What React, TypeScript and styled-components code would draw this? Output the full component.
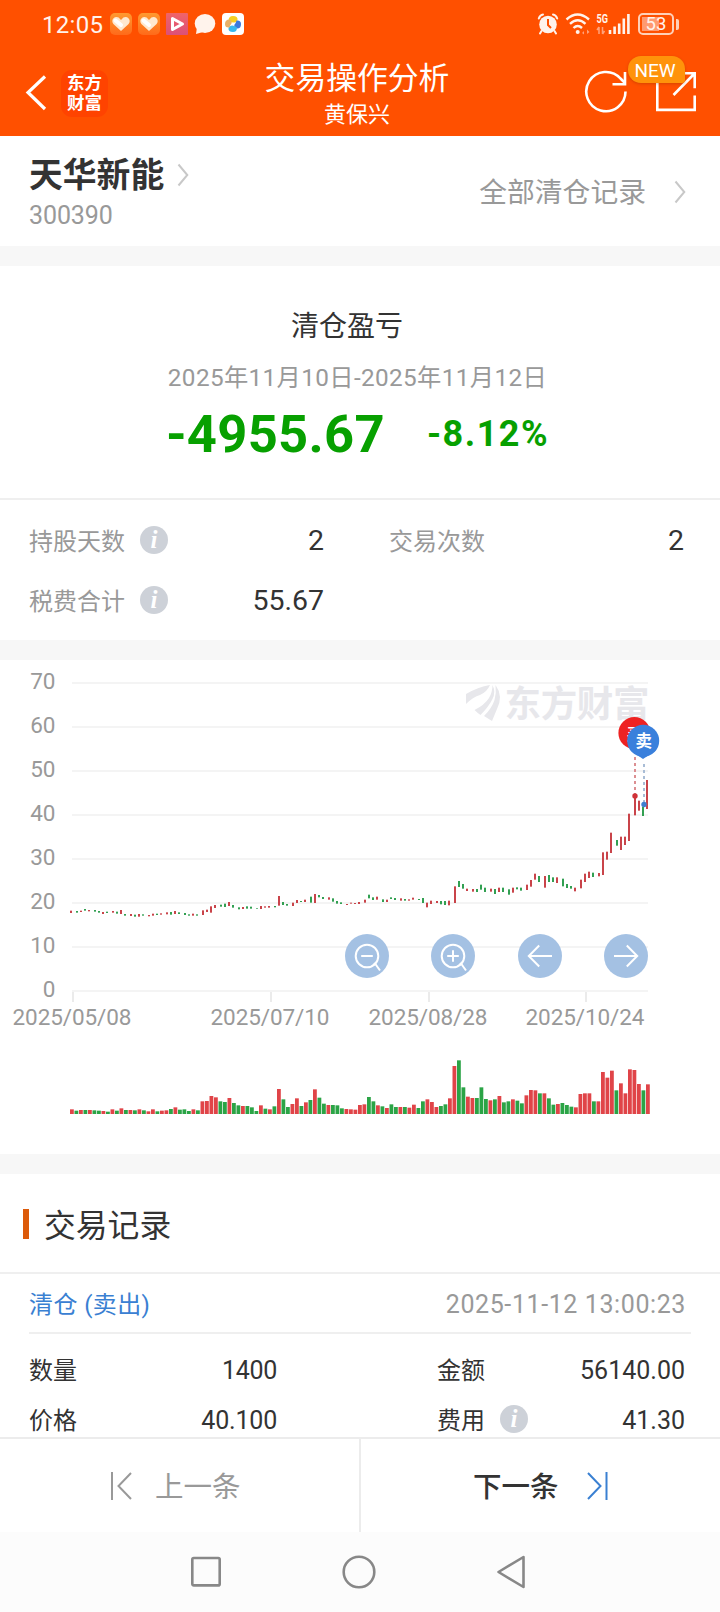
import React from 'react';
import styled, { createGlobalStyle } from 'styled-components';

const GlobalStyle = createGlobalStyle`
  * { box-sizing: border-box; }
  body {
    margin: 0;
    background: #fff;
    color: #333;
    font-family: Roboto, "Noto Sans CJK SC", sans-serif;
  }
  svg { display: block; flex: none; }
`;

const Page = styled.div`
  width: 720px;
  height: 1612px;
  display: flex;
  flex-direction: column;
  overflow: hidden;
  background: #fff;
`;

const Label = styled.span<{
  $size: number;
  $color?: string;
  $weight?: number;
  $track?: number;
  $line?: number;
  $pad?: number;
}>`
  padding-top: ${(p) => p.$pad ?? 0}px;
  font-size: ${(p) => p.$size}px;
  color: ${(p) => p.$color ?? '#333'};
  font-weight: ${(p) => p.$weight ?? 400};
  letter-spacing: ${(p) => p.$track ?? 0}px;
  line-height: ${(p) => p.$line ?? 28}px;
  white-space: nowrap;
`;

/* ---------- status bar and header ---------- */

const TopArea = styled.header`
  height: 136px;
  flex: none;
  background: #ff5000;
`;

const StatusBar = styled.div`
  height: 48px;
  padding: 0 41px 0 42px;
  display: flex;
  align-items: center;
  justify-content: space-between;
`;

const StatusGroup = styled.div<{ $gap: number }>`
  display: flex;
  align-items: center;
  gap: ${(p) => p.$gap}px;
`;

const Clock = styled(Label)`
  width: 62px;
`;

const AppBadge = styled.span<{ $bg: string; $round: number }>`
  width: 22px;
  height: 22px;
  border-radius: ${(p) => p.$round}px;
  background: ${(p) => p.$bg};
  display: flex;
  align-items: center;
  justify-content: center;
`;

const Battery = styled.span`
  width: 36px;
  height: 22px;
  margin-left: 7px;
  border: 2px solid #ffd0b8;
  border-radius: 5px;
  background: linear-gradient(to right, #ff9a70 0 17px, transparent 17px) 2px 2px / 30px 14px no-repeat;
  color: #fff3ec;
  font-size: 18.5px;
  line-height: 18px;
  text-align: center;
`;

const BatteryTip = styled.span`
  width: 3px;
  height: 11px;
  margin-left: 2px;
  border-radius: 0 2px 2px 0;
  background: #ffd0b8;
`;

const TitleBar = styled.div`
  height: 88px;
  padding: 0 23px 0 17px;
  display: grid;
  grid-template-columns: 1fr auto 1fr;
`;

const BrandSide = styled.div`
  display: flex;
  align-items: center;
  gap: 14px;
`;

const BrandLogo = styled.div`
  width: 47px;
  height: 47px;
  margin-top: 2px;
  border-radius: 11px;
  background: #ff4300;
  display: flex;
  flex-direction: column;
  align-items: center;
  justify-content: center;
`;

const TitleColumn = styled.div`
  padding-top: 11px;
  display: flex;
  flex-direction: column;
  align-items: center;
  gap: 2px;
`;

const ActionSide = styled.div`
  position: relative;
  display: flex;
  justify-content: flex-end;
  align-items: flex-start;
  padding-top: 21px;
  gap: 26px;
`;

const NewBadge = styled.span`
  position: absolute;
  top: 8px;
  right: 12px;
  width: 57px;
  height: 27px;
  border-radius: 13px 13px 3px 13px;
  background: #ff930a;
  box-shadow: 0 1px 3px rgba(120, 40, 0, 0.3);
  color: #fff;
  font-size: 19px;
  line-height: 29px;
  text-align: center;
  padding-right: 3px;
`;

/* ---------- stock and profit ---------- */

const Gutter = styled.div`
  height: 20px;
  flex: none;
  background: #f7f7f7;
`;

const StockRow = styled.section`
  height: 110px;
  flex: none;
  padding: 17px 34px 0 29px;
  display: flex;
  justify-content: space-between;
`;

const StockColumn = styled.div`
  display: flex;
  flex-direction: column;
  gap: 4px;
`;

const InlineLink = styled.div<{ $gap: number; $height: number; $top?: number }>`
  height: ${(p) => p.$height}px;
  margin-top: ${(p) => p.$top ?? 0}px;
  display: flex;
  align-items: center;
  gap: ${(p) => p.$gap}px;
`;

const ProfitPanel = styled.section`
  height: 234px;
  flex: none;
  padding: 41px 5px 0 0;
  border-bottom: 2px solid #efefef;
  display: flex;
  flex-direction: column;
  align-items: center;
`;

const ProfitTitle = styled(Label)`
  margin: 0 21px 16px 0;
`;

const ProfitFigures = styled.div`
  margin-top: 8px;
  height: 66px;
  display: flex;
  align-items: center;
  gap: 42px;
`;

const StatsGrid = styled.section`
  height: 140px;
  flex: none;
  padding: 10px 35px 0 29px;
  display: grid;
  grid-template-columns: 295px 295px;
  grid-auto-rows: 60px;
  column-gap: 65px;
`;

const Stat = styled.div`
  display: flex;
  align-items: center;
`;

const StatValue = styled(Label)`
  margin-left: auto;
`;

const InfoMark = styled.span<{ $lift?: number }>`
  width: 28px;
  height: 28px;
  margin-left: 15px;
  margin-bottom: ${(p) => p.$lift ?? 0}px;
  border-radius: 50%;
  background: #cdd1d8;
  color: #fff;
  font: italic bold 25px/27px "Liberation Serif", serif;
  text-align: center;
`;

/* ---------- chart ---------- */

const ChartPanel = styled.section`
  position: relative;
  height: 494px;
  flex: none;
`;

const ChartTools = styled.div`
  position: absolute;
  left: 345px;
  top: 274px;
  width: 303px;
  display: flex;
  justify-content: space-between;
`;

const ToolButton = styled.button`
  width: 44px;
  height: 44px;
  padding: 0;
  border: 0;
  border-radius: 50%;
  background: rgba(157, 188, 225, 0.93);
`;

/* ---------- trade records ---------- */

const SectionTitle = styled.div`
  height: 100px;
  flex: none;
  padding: 2px 0 0 23px;
  border-bottom: 2px solid #efefef;
  display: flex;
  align-items: center;
  gap: 15px;
`;

const Accent = styled.span`
  width: 6px;
  height: 30px;
  background: #dc5a0a;
`;

const RecordHead = styled.div`
  height: 60px;
  flex: none;
  margin: 0 29px;
  padding-right: 5px;
  border-bottom: 2px solid #efefef;
  display: flex;
  align-items: center;
  justify-content: space-between;
`;

const RecordGrid = styled.div`
  height: 103px;
  flex: none;
  padding: 12px 35px 0 29px;
  display: grid;
  grid-template-columns: 248px 248px;
  grid-auto-rows: 50px;
  justify-content: space-between;
  overflow: hidden;
`;

const Pager = styled.nav`
  height: 95px;
  flex: none;
  border-top: 2px solid #ececec;
  display: grid;
  grid-template-columns: 359px 361px;
`;

const PagerButton = styled.div<{ $divided?: boolean; $gap: number; $left: number }>`
  padding-left: ${(p) => p.$left}px;
  border-left: ${(p) => (p.$divided ? '2px solid #ececec' : '0')};
  display: flex;
  align-items: center;
  gap: ${(p) => p.$gap}px;
`;

const SystemNav = styled.footer`
  height: 80px;
  flex: none;
  padding: 0 192px 0 189px;
  background: #fcfcfc;
  display: flex;
  align-items: center;
  justify-content: space-between;
`;

/* ---------- data, in thirds of a pixel measured inside the plot ---------- */

const CANDLES = `
r152,159 g153,158 r152,156 g147,152 r150,154 g150,155 g153,158 r156,162 g155,159 r153,158 g155,161 r150,162
g162,167 r162,168 g164,170 r162,170 g163,167 r165,169 r161,167 g161,165 r160,164 r157,163 g156,164 r153,162
g157,162 g159,165 g163,167 r161,167 g163,167 r151,165 r149,156 r139,158 r135,144 g134,140 g131,141 r126,138
g135,143 g142,148 r141,147 g139,146 g140,146 g145,147 r138,147 r139,143 r138,143 g138,142 r108,137 g126,135
g132,137 r128,138 r120,129 g123,126 r119,126 g110,128 r102,129 g105,112 g111,117 r112,119 g115,125 g123,131
g127,132 r132,135 r128,131 r129,132 r126,132 r119,128 g104,115 g112,120 r110,119 g118,126 r119,126 g112,117
g114,120 r115,122 g117,122 r118,122 r113,119 g117,120 g114,129 r128,142 r122,132 r123,129 g123,133 g123,135
r122,136 r79,129 g63,81 g72,86 r86,93 r87,95 g87,96 g74,89 g83,96 r86,95 g87,102 r83,96
g83,96 g88,104 r83,98 g82,88 g83,92 r74,90 r60,80 r41,59 g48,66 r48,83 g45,66 g52,66
r52,69 g56,79 g72,84 g78,86 r83,94 r59,85 r41,66 r35,54 g38,51 r39,49 r-23,45 r-25,-1
r-82,-21 g-60,-43 r-70,-30 r-70,-45 r-139,-57 r-190,-134 r-178,-148 g-160,-132 r-240,-153`
  .trim()
  .split(/\s+/)
  .map((c) => {
    const [top, bottom] = c.slice(1).split(',').map(Number);
    return { up: c[0] === 'r', top, bottom };
  });

const VOLUMES = `
r208 g212 r210 g210 r210 g211 g212 r213 g215 r208 g212 r205 g210 r210 g211 r208 g211 r214 r208 g214 r212 r211
g207 r202 g209 g208 g213 r208 g211 r184 r183 r168 r172 g184 g186 r174 g189 g196 r198 g198 g202 g213 r196 g206
r208 g199 r147 g178 g201 r192 r175 g198 r187 g180 r148 g173 g191 r195 g195 g196 g205 r207 r208 r209 r195 r193
g171 g184 r196 g199 r204 g193 g201 r201 g201 r203 r194 g204 g184 r178 r186 r201 g198 g193 r175 r78 g61 g142
r170 r174 g174 g142 g177 r181 g178 r168 g187 g184 r178 g182 g190 r166 r150 r151 g160 r160 g175 g194 r192 g189
g195 g200 r202 r162 r160 r160 g184 r184 r96 r113 r92 g151 r130 r160 r88 r90 r132 g151 r133`
  .trim()
  .split(/\s+/)
  .map((v) => ({ up: v[0] === 'r', top: Number(v.slice(1)) }));

const DATES = [
  { x: 72, text: '2025/05/08' },
  { x: 270, text: '2025/07/10' },
  { x: 428, text: '2025/08/28' },
  { x: 585, text: '2025/10/24' },
];

const Chart = () => (
  <svg width="720" height="494" viewBox="0 660 720 494" fontFamily='Roboto, "Noto Sans CJK SC", sans-serif'>
    <g fill="#e7e7eb">
      <path d="M466 694q12-7 24-9-3 7-10 10-7 2-14 9z" />
      <path d="M474.500 710q10-5 14.500-12 3.500-6 3.500-13 3.500 7 0 14-4 8-12 16-3.500-2.500-6-5z" />
      <path d="M495.500 685q8 11 1.500 24l-5 12-8-5q8-8 10.500-16 2-7 1-15z" />
      <text x="504.500" y="717" fontSize="36.500" fontWeight="700" textLength="145">东方财富</text>
    </g>
    {[70, 60, 50, 40, 30, 20, 10, 0].map((n, i) => (
      <g key={n}>
        <rect x="72" y={682 + i * 44} width="576" height="2" fill="#f4f4f4" />
        <text x="55.500" y={689 + i * 44} fontSize="22.500" fill="#999" textAnchor="end">{n}</text>
      </g>
    ))}
    {DATES.map((d) => (
      <g key={d.text}>
        <rect x={d.x} y="992" width="2" height="10" fill="#ebebeb" />
        <text x={d.x} y="1025.300" fontSize="22.500" fill="#999" textAnchor="middle" textLength="119">{d.text}</text>
      </g>
    ))}
    {CANDLES.map((c, i) => (
      <rect
        key={i}
        x={70 + 2 * Math.ceil(2.25 * i)}
        y={860 + c.top / 3}
        width="2"
        height={(c.bottom - c.top) / 3}
        fill={c.up ? '#c9444a' : '#32a052'}
      />
    ))}
    {VOLUMES.map((v, i) => (
      <rect
        key={i}
        x={70 + 4.5 * i}
        y={1040 + v.top / 3}
        width="3.800"
        height={(222 - v.top) / 3}
        fill={v.up ? '#e04448' : '#2ba446'}
      />
    ))}
    <path d="M635 757V794" stroke="#dc8f92" strokeWidth="2" strokeDasharray="3 3" />
    <path d="M644 764V802" stroke="#a9bdd6" strokeWidth="2" strokeDasharray="3 3" />
    <circle cx="635" cy="796" r="2.700" fill="#d03238" />
    <circle cx="644" cy="804.500" r="2.700" fill="#3f7fd0" />
    <circle cx="634.400" cy="733" r="16" fill="#ee2222" />
    <text x="634.400" y="739.500" fontSize="16" fontWeight="500" fill="#fff" textAnchor="middle">买</text>
    <path d="M630.500 750.500 643 759 656 750.500z" fill="#3a80dc" />
    <circle cx="643.200" cy="740.800" r="16" fill="#3a80dc" />
    <text x="643.700" y="747" fontSize="16.500" fontWeight="700" fill="#fff" textAnchor="middle">卖</text>
  </svg>
);

/* ---------- icons ---------- */

const HeartIcon = () => (
  <svg width="20" height="16" viewBox="0 0 20 16">
    <path d="M10 15 2.400 8C-.8 4 3.600-.6 7.600 1.500L10 4l2.400-2.500c4-2.100 8.400 2.500 5.200 6.500z" fill="#ffe9cf" />
    <path d="M4.500 4.500 10 9" stroke="#fff" strokeWidth="4" strokeLinecap="round" />
  </svg>
);

const Chevron = () => (
  <svg width="12" height="24" viewBox="0 0 12 24" fill="none" stroke="#c8c8c8" strokeWidth="2">
    <path d="M1.500 1.500 10.300 12 1.500 22.500" />
  </svg>
);

const ToolIcon = ({ kind }: { kind: 'out' | 'in' | 'left' | 'right' }) => (
  <svg width="44" height="44" viewBox="0 0 44 44" fill="none" stroke="#fff" strokeWidth="2">
    {(kind === 'out' || kind === 'in') && (
      <>
        <circle cx="22" cy="22" r="11.300" />
        <path d="M16.200 22h11.600M28.500 31l1.500-1.500 5 7" />
      </>
    )}
    {kind === 'in' && <path d="M22 16.200v11.600" />}
    {kind === 'left' && <path d="M34 22H10.800M21.200 11.500 10.800 22l10.400 10.500" />}
    {kind === 'right' && <path d="M10 22h23.200M22.800 11.500 33.200 22 22.800 32.500" />}
  </svg>
);

export default function App() {
  return (
    <Page>
      <GlobalStyle />
      <TopArea>
        <StatusBar>
          <StatusGroup $gap={6}>
            <Clock $size={24} $color="#fff3ec" $track={0.3} $pad={1}>12:05</Clock>
            <AppBadge $bg="linear-gradient(#ff9a30, #ff6a1a)" $round={5}><HeartIcon /></AppBadge>
            <AppBadge $bg="linear-gradient(#ff9a30, #ff6a1a)" $round={5}><HeartIcon /></AppBadge>
            <AppBadge $bg="linear-gradient(#f06468, #dc5078)" $round={1}>
              <svg width="16" height="16" viewBox="0 0 16 16" fill="none" stroke="#fff" strokeWidth="3" strokeLinejoin="round">
                <path d="M3.500 2.500v11L13.500 8z" />
              </svg>
            </AppBadge>
            <AppBadge $bg="transparent" $round={0}>
              <svg width="22" height="22" viewBox="0 0 22 22" fill="#fff3ec">
                <ellipse cx="11" cy="10.500" rx="10.300" ry="9.500" />
                <path d="M3 14 2 21l7-2z" />
              </svg>
            </AppBadge>
            <AppBadge $bg="#fff" $round={4}>
              <svg width="18" height="18" viewBox="0 0 18 18">
                <path d="M4.500 6Q4.500 1 9 1q5 0 4.500 4Q13 8 9.500 7.500 6 7.500 4.500 6z" fill="#f6cf22" />
                <path d="M12.500 5.500Q17 5 17 9q0 5-4.500 4.500Q9.500 12.500 10.500 9.500 12 8 12.500 5.500z" fill="#3a78dc" />
                <path d="M13 12.500Q13 17 9 17q-5 0-4.500-4Q5 10.500 8.500 10.500 11.500 11 13 12.500z" fill="#38b8ec" />
                <path d="M5.500 12.500Q1 13 1 9q0-4.500 4.500-4.500Q8 5.500 7.500 8.500 6 10 5.500 12.500z" fill="#e8b068" />
              </svg>
            </AppBadge>
          </StatusGroup>
          <StatusGroup $gap={0}>
            <svg width="94" height="26" viewBox="0 -2 94 26" fill="none" stroke="#fff3ec" strokeWidth="2">
              <circle cx="11" cy="11.500" r="8.800" fill="#fff3ec" stroke="none" />
              <path d="M1.800 5.500Q3 2 6 1.600M20.200 5.500Q19 2 16 1.600M4.500 18 3 20.500M17.500 18l1.500 2.500" strokeLinecap="round" />
              <path d="M11 6v6l3 3" stroke="#ff5000" />
              <path d="M29.500 6.500q11-10 22.500 0M33 10.800q7.700-7 15.500 0M36.500 15q4.200-4 8.500 0" strokeWidth="2.400" />
              <circle cx="40.700" cy="19" r="2" fill="#fff3ec" stroke="none" />
              <path d="M47 18l-2 2 2 1.500zM50 16.500l2.500 2.500L50 21z" fill="#ffa27c" stroke="none" />
              <path d="M62 14v7M60 17l2-3M65.500 14v7M67.500 18l-2 3" stroke="#ffa27c" strokeWidth="1.500" />
              <path d="M73 21v-4M77.600 21v-7.500M82.200 21V10.500M86.800 21V5.500M91.400 21V1" strokeWidth="2.600" />
              <text x="59.500" y="10" fontSize="12" fontWeight="700" fill="#fff3ec" stroke="none" fontFamily="Roboto, sans-serif" textLength="11.500" lengthAdjust="spacingAndGlyphs">5G</text>
            </svg>
            <Battery>53</Battery>
            <BatteryTip />
          </StatusGroup>
        </StatusBar>
        <TitleBar>
          <BrandSide>
            <svg width="30" height="38" viewBox="0 0 30 38" fill="none" stroke="#fff" strokeWidth="3.200">
              <path d="M28 3.500 11 19.500l17 16.500" />
            </svg>
            <BrandLogo>
              <Label $size={17.5} $color="#fff" $weight={700} $line={20}>东方</Label>
              <Label $size={17.5} $color="#fff" $weight={700} $line={20}>财富</Label>
            </BrandLogo>
          </BrandSide>
          <TitleColumn>
            <Label $size={30.8} $color="#fff" $line={40}>交易操作分析</Label>
            <Label $size={22} $color="#fff">黄保兴</Label>
          </TitleColumn>
          <ActionSide>
            <svg width="46" height="46" viewBox="0 0 46 46" fill="none" stroke="#fff" strokeWidth="2.600">
              <path d="M42.500 22.500A19.600 19.600 0 1 1 37.500 9.500l4 4" />
              <path d="M42 3v12.300H29.500" />
            </svg>
            <svg width="42" height="46" viewBox="0 0 42 46" fill="none" stroke="#fff" strokeWidth="2.600">
              <path d="M14 4.300H2.300v36.600h37.400V26.500" />
              <path d="M28 4.300h11.700v15M39.500 4.500 18.500 26" />
            </svg>
            <NewBadge>NEW</NewBadge>
          </ActionSide>
        </TitleBar>
      </TopArea>

      <StockRow>
        <StockColumn>
          <InlineLink $gap={13} $height={44}>
            <Label $size={33.8} $weight={700} $line={44} $pad={2}>天华新能</Label>
            <Chevron />
          </InlineLink>
          <Label $size={25} $color="#999" $track={-0.1} $pad={1}>300390</Label>
        </StockColumn>
        <InlineLink $gap={28} $height={40} $top={19}>
          <Label $size={27.8} $color="#999" $pad={1}>全部清仓记录</Label>
          <Chevron />
        </InlineLink>
      </StockRow>
      <Gutter />

      <ProfitPanel>
        <ProfitTitle $size={28} $line={40}>清仓盈亏</ProfitTitle>
        <Label $size={24.3} $color="#999" $track={0.36} $line={30}>2025年11月10日-2025年11月12日</Label>
        <ProfitFigures>
          <Label $size={52.5} $weight={700} $color="#07a000" $track={0.3} $line={66}>-4955.67</Label>
          <Label $size={36} $weight={700} $color="#07a000" $track={1.5} $line={44}>-8.12%</Label>
        </ProfitFigures>
      </ProfitPanel>

      <StatsGrid>
        <Stat>
          <Label $size={24} $color="#999" $pad={3}>持股天数</Label>
          <InfoMark>i</InfoMark>
          <StatValue $size={28.5} $pad={1}>2</StatValue>
        </Stat>
        <Stat>
          <Label $size={24} $color="#999" $pad={3}>交易次数</Label>
          <StatValue $size={28.5} $pad={1}>2</StatValue>
        </Stat>
        <Stat>
          <Label $size={24} $color="#999" $pad={3}>税费合计</Label>
          <InfoMark>i</InfoMark>
          <StatValue $size={28.5} $pad={2}>55.67</StatValue>
        </Stat>
      </StatsGrid>
      <Gutter />

      <ChartPanel>
        <Chart />
        <ChartTools>
          <ToolButton><ToolIcon kind="out" /></ToolButton>
          <ToolButton><ToolIcon kind="in" /></ToolButton>
          <ToolButton><ToolIcon kind="left" /></ToolButton>
          <ToolButton><ToolIcon kind="right" /></ToolButton>
        </ChartTools>
      </ChartPanel>
      <Gutter />

      <SectionTitle>
        <Accent />
        <Label $size={31.8} $line={40} $pad={4}>交易记录</Label>
      </SectionTitle>
      <RecordHead>
        <Label $size={24} $color="#3a80d2" $track={0.4} $pad={3}>清仓 (卖出)</Label>
        <Label $size={25} $color="#999" $track={0.6} $pad={3}>2025-11-12 13:00:23</Label>
      </RecordHead>
      <RecordGrid>
        <Stat>
          <Label $size={24}>数量</Label>
          <StatValue $size={25} $track={-0.3}>1400</StatValue>
        </Stat>
        <Stat>
          <Label $size={24}>金额</Label>
          <StatValue $size={25}>56140.00</StatValue>
        </Stat>
        <Stat>
          <Label $size={24}>价格</Label>
          <StatValue $size={25} $track={-0.2}>40.100</StatValue>
        </Stat>
        <Stat>
          <Label $size={24}>费用</Label>
          <InfoMark $lift={4}>i</InfoMark>
          <StatValue $size={25}>41.30</StatValue>
        </Stat>
      </RecordGrid>

      <Pager>
        <PagerButton $gap={23} $left={110}>
          <svg width="22" height="30" viewBox="0 0 22 30" fill="none" stroke="#999" strokeWidth="2">
            <path d="M2 1v28M21 2 8.500 15 21 28" />
          </svg>
          <Label $size={28.5} $color="#999" $line={40} $pad={4}>上一条</Label>
        </PagerButton>
        <PagerButton $divided $gap={28} $left={112}>
          <Label $size={28.5} $weight={500} $line={40} $pad={4}>下一条</Label>
          <svg width="22" height="30" viewBox="0 0 22 30" fill="none" stroke="#3a80d2" strokeWidth="2">
            <path d="M19.500 1v28M1 2l12.500 13L1 28" />
          </svg>
        </PagerButton>
      </Pager>

      <SystemNav>
        <svg width="34" height="36" viewBox="0 0 34 36" fill="none" stroke="#888" strokeWidth="2.600">
          <rect x="3.300" y="4" width="27.400" height="27.400" rx="1.500" />
        </svg>
        <svg width="36" height="36" viewBox="0 0 36 36" fill="none" stroke="#888" strokeWidth="2.600">
          <circle cx="18" cy="18" r="15.300" />
        </svg>
        <svg width="34" height="36" viewBox="0 0 34 36" fill="none" stroke="#888" strokeWidth="2.600" strokeLinejoin="round">
          <path d="M29.500 3v30L4.500 18z" />
        </svg>
      </SystemNav>
    </Page>
  );
}
